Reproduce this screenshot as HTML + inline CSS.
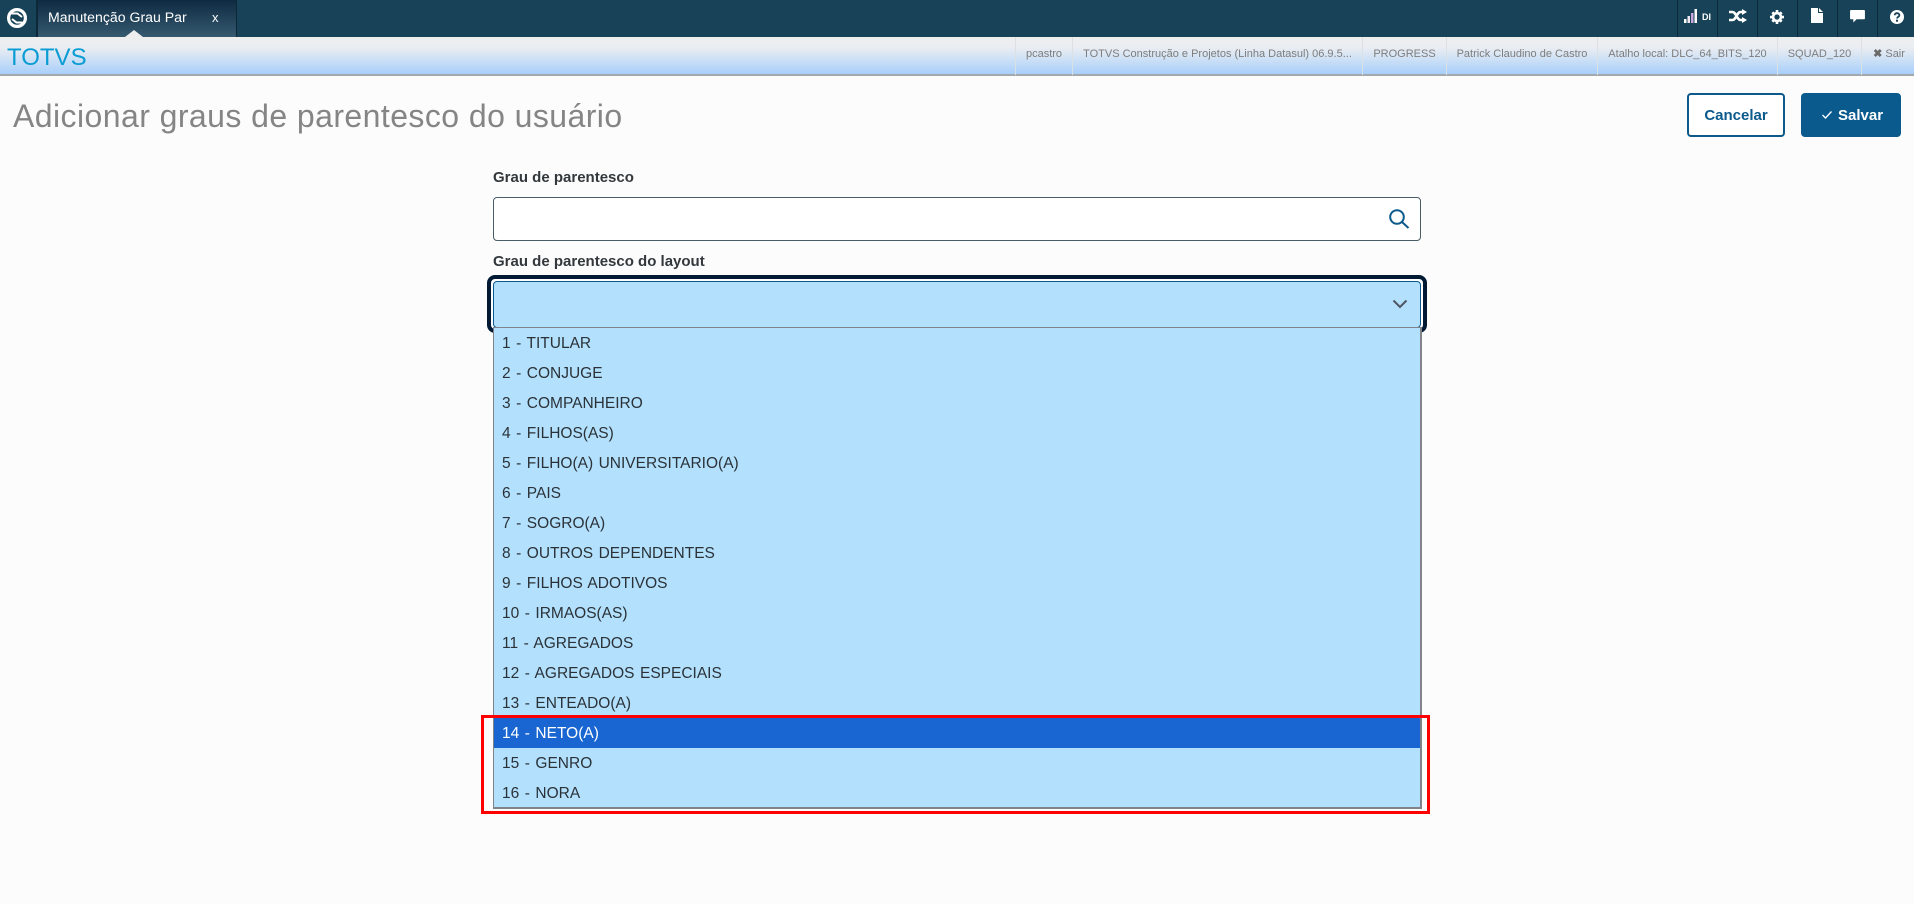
<!DOCTYPE html>
<html lang="pt"><head><meta charset="utf-8"><title>Manutenção Grau Par</title>
<style>
*{box-sizing:border-box}
html,body{margin:0;padding:0;width:1914px;height:904px;overflow:hidden;background:#fcfcfc;font-family:"Liberation Sans",sans-serif}
.abs{position:absolute}
#top{left:0;top:0;width:1914px;height:37px;background:#174257}
#tab{left:37px;top:0;width:200px;height:37px;background:linear-gradient(#0e2a41,#365a70);border-left:1px solid #0c2738;border-right:1px solid #0c2738;color:#fff;font-size:14.1px;line-height:35px;padding-left:10px}
#tab span{display:inline-block;width:139px;overflow:hidden;white-space:nowrap;vertical-align:top}
#tab i{font-style:normal;position:absolute;left:174px;top:0;font-size:13px}
#notch{left:125px;top:30px;width:0;height:0;border-left:9px solid transparent;border-right:9px solid transparent;border-bottom:7px solid #eeeeee}
.sep{top:0;width:1px;height:37px;background:#0d2a3c}
#sub{left:0;top:37px;width:1914px;height:39px;background:linear-gradient(#eeeeee 0,#e9edf2 30%,#a8cffa 100%);border-bottom:2px solid #a3a8ac}
#logo{left:7px;top:44px;font-size:24px;line-height:28px;color:#0a9cd3}
.cell{top:37px;height:38px;border-left:1px solid #dbe0e4;color:#7d7d7d;font-size:11px;line-height:34px;text-align:center;white-space:nowrap}
#title{left:13px;top:96px;font-size:32px;line-height:40px;color:#858585;letter-spacing:.43px;white-space:nowrap}
#cancel{left:1687px;top:93px;width:98px;height:44px;border:2px solid #0c5a8c;border-radius:4px;background:#fff;color:#0c5a8c;font-weight:700;font-size:15px;line-height:42px;text-align:center}
#save{left:1801px;top:93px;width:100px;height:44px;border-radius:4px;background:#0a5a8e;color:#fff;font-weight:700;font-size:15px;line-height:46px;padding-left:37px}
.lbl{left:493px;font-size:15px;font-weight:700;line-height:20px;color:#33383c;white-space:nowrap}
#inp{left:493px;top:197px;width:928px;height:44px;border:1px solid #4a5c66;border-radius:4px;background:#fff}
#ring{left:487px;top:275px;width:940px;height:58px;border:4px solid #001a33;border-radius:8px;background:#fff}
#sel{left:493px;top:281px;width:928px;height:47px;border:1px solid #0c5a8c;border-radius:4px;background:#b3e0fd}
#list{left:493px;top:327px;width:929px;height:482px;background:#b3e0fd;border:1px solid #808488;border-bottom-width:2px;border-right-width:2px}
#list div{height:30px;line-height:31px;padding-left:8px;font-size:15.5px;word-spacing:1.2px;color:#2a3238;white-space:nowrap}
#list div.on{background:#1966d2;color:#fff;margin-right:0}
#red{left:481px;top:715px;width:949px;height:99px;border:3px solid #ff0000;pointer-events:none}
</style></head><body>
<div class="abs" id="top"></div>
<svg class="abs" style="left:7px;top:8px" width="20" height="20" viewBox="0 0 20 20"><circle cx="10" cy="10" r="8.400" fill="none" stroke="#fff" stroke-width="3.200"/><path d="M4 6.500L15.500 9.500 16 13.500 5 11z" fill="#174257"/><path d="M4.500 5.500h6l4.500 3.500" fill="none" stroke="#fff" stroke-width="2"/><path d="M15.500 14.500h-6L5 11" fill="none" stroke="#fff" stroke-width="2"/></svg>
<div class="abs" id="tab"><span>Manutenção Grau Par</span><i>x</i></div>
<div class="abs" id="notch"></div>
<div class="abs sep" style="left:36px"></div>
<div class="abs sep" style="left:1677px"></div>
<div class="abs sep" style="left:1717px"></div>
<div class="abs sep" style="left:1757px"></div>
<div class="abs sep" style="left:1797px"></div>
<div class="abs sep" style="left:1837px"></div>
<div class="abs sep" style="left:1877px"></div>
<svg class="abs" style="left:1684px;top:9px" width="14" height="14" viewBox="0 0 14 14"><rect x="0" y="10" width="2.500" height="4" fill="#fff"/><rect x="3.500" y="7" width="2.500" height="7" fill="#f0e8f0"/><rect x="7" y="4" width="2.500" height="10" fill="#c8a8dc"/><rect x="10.500" y="0" width="2.500" height="14" fill="#fff"/></svg>
<div class="abs" style="left:1702px;top:11px;color:#fff;font-size:9px;font-weight:700;line-height:12px">DI</div>
<svg class="abs" style="left:1729px;top:9px" width="18" height="14" viewBox="0 0 18 14"><path d="M0 3h3.500c3.500 0 4.500 8 8 8H14" fill="none" stroke="#fff" stroke-width="2.600"/><path d="M0 11h3.500c3.500 0 4.500-8 8-8H14" fill="none" stroke="#fff" stroke-width="2.600"/><path d="M13 0l5 3-5 3zM13 8l5 3-5 3z" fill="#fff"/></svg>
<svg class="abs" style="left:1770px;top:10px" width="14" height="14" viewBox="0 0 16 16"><circle cx="8" cy="8" r="4.500" fill="none" stroke="#fff" stroke-width="3"/><path d="M6.500 0h3v3h-3zM6.500 13h3v3h-3zM0 6.500h3v3H0zM13 6.500h3v3h-3zM1.600 3.700l2.100-2.100 2 2-2.100 2.100zM10.300 12.400l2.100-2.100 2 2-2.100 2.100zM1.600 12.300l2-2 2.100 2.100-2 2zM10.300 3.600l2-2 2.100 2.100-2 2z" fill="#fff"/></svg>
<svg class="abs" style="left:1811px;top:8px" width="12" height="15" viewBox="0 0 12 15"><path d="M0 0h7v5h5v10H0zM8 0l4 4H8z" fill="#fff"/></svg>
<svg class="abs" style="left:1850px;top:10px" width="15" height="13" viewBox="0 0 16 14"><path d="M1 0h14a1 1 0 0 1 1 1v8a1 1 0 0 1-1 1H7l-3.500 3.500V10H1a1 1 0 0 1-1-1V1a1 1 0 0 1 1-1z" fill="#fff"/></svg>
<svg class="abs" style="left:1890px;top:10px" width="14" height="14" viewBox="0 0 14 14"><circle cx="7" cy="7" r="7" fill="#fff"/><path d="M4.700 5.300C4.700 3.900 5.800 3.200 7 3.200s2.400.7 2.400 2c0 1.700-2.400 1.700-2.400 3.300" fill="none" stroke="#174257" stroke-width="1.800"/><rect x="6" y="9.700" width="2" height="2" fill="#174257"/></svg>

<div class="abs" id="sub"></div>
<div class="abs" id="logo">TOTVS</div>
<div class="abs cell" style="left:1015px;width:57px">pcastro</div>
<div class="abs cell" style="left:1072px;width:290px">TOTVS Construção e Projetos (Linha Datasul) 06.9.5...</div>
<div class="abs cell" style="left:1362px;width:84px">PROGRESS</div>
<div class="abs cell" style="left:1446px;width:151px">Patrick Claudino de Castro</div>
<div class="abs cell" style="left:1597px;width:180px">Atalho local: DLC_64_BITS_120</div>
<div class="abs cell" style="left:1777px;width:84px">SQUAD_120</div>
<div class="abs cell" style="left:1861px;width:53px;padding-left:2px;line-height:35px"><b style="font-size:11px;color:#6a6a6a">✖</b> Sair</div>

<div class="abs" id="title">Adicionar graus de parentesco do usuário</div>
<div class="abs" id="cancel">Cancelar</div>
<div class="abs" id="save">Salvar</div>
<svg class="abs" style="left:1821px;top:110px" width="12" height="10" viewBox="0 0 12 10"><path d="M1.500 5l3 3 6-6.500" fill="none" stroke="#fff" stroke-width="1.300"/></svg>

<div class="abs lbl" style="top:168px">Grau de parentesco</div>
<div class="abs" id="inp"></div>
<svg class="abs" style="left:1388px;top:208px" width="22" height="22" viewBox="0 0 22 22"><circle cx="9" cy="9" r="6.800" fill="none" stroke="#0c5a8c" stroke-width="2"/><path d="M14 14l6.500 6" fill="none" stroke="#0c5a8c" stroke-width="2"/></svg>
<div class="abs lbl" style="top:252px">Grau de parentesco do layout</div>
<div class="abs" id="ring"></div>
<div class="abs" id="sel"></div>
<svg class="abs" style="left:1392px;top:298px" width="16" height="12" viewBox="0 0 16 12"><path d="M1.500 2.500L8 9l6.500-6.500" fill="none" stroke="#4c5560" stroke-width="2"/></svg>
<div class="abs" id="list">
<div>1 - TITULAR</div>
<div>2 - CONJUGE</div>
<div>3 - COMPANHEIRO</div>
<div>4 - FILHOS(AS)</div>
<div>5 - FILHO(A) UNIVERSITARIO(A)</div>
<div>6 - PAIS</div>
<div>7 - SOGRO(A)</div>
<div>8 - OUTROS DEPENDENTES</div>
<div>9 - FILHOS ADOTIVOS</div>
<div>10 - IRMAOS(AS)</div>
<div>11 - AGREGADOS</div>
<div>12 - AGREGADOS ESPECIAIS</div>
<div>13 - ENTEADO(A)</div>
<div class="on">14 - NETO(A)</div>
<div>15 - GENRO</div>
<div>16 - NORA</div>
</div>
<div class="abs" id="red"></div>
</body></html>
